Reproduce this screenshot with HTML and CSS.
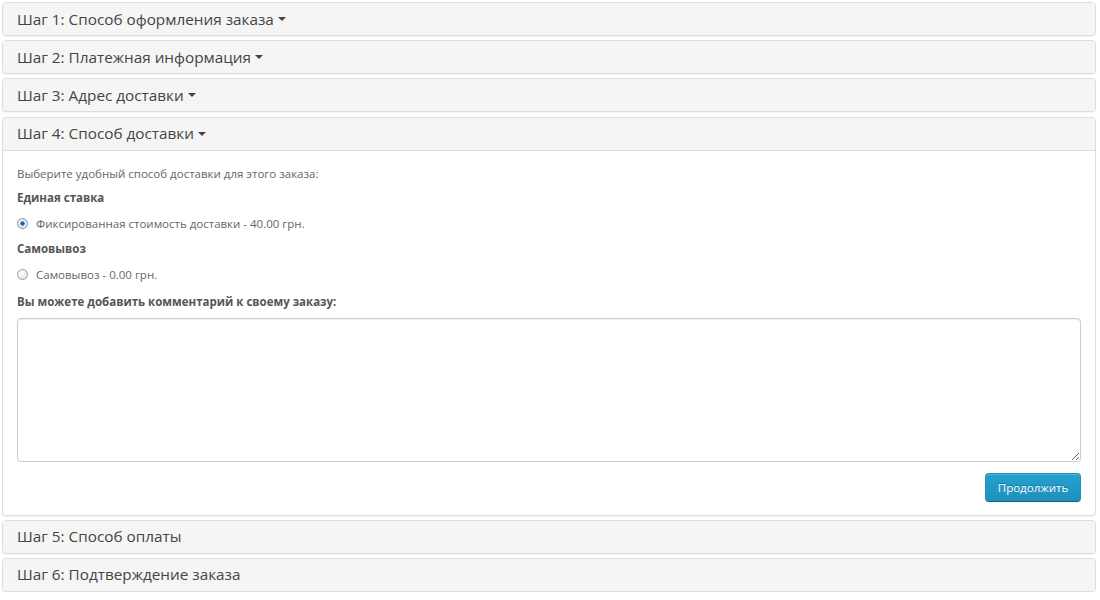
FILE: index.html
```html
<!DOCTYPE html>
<html lang="ru">
<head>
<meta charset="utf-8">
<title>Оформление заказа</title>
<link rel="stylesheet" href="styles.css">
</head>
<body>
<div class="panel-group">
  <div class="panel">
    <div class="panel-heading"><h4 class="panel-title">Шаг 1: Способ оформления заказа <span class="caret"></span></h4></div>
  </div>
  <div class="panel">
    <div class="panel-heading"><h4 class="panel-title">Шаг 2: Платежная информация <span class="caret"></span></h4></div>
  </div>
  <div class="panel">
    <div class="panel-heading"><h4 class="panel-title">Шаг 3: Адрес доставки <span class="caret"></span></h4></div>
  </div>
  <div class="panel">
    <div class="panel-heading open"><h4 class="panel-title">Шаг 4: Способ доставки <span class="caret"></span></h4></div>
    <div class="panel-body">
      <p class="line first">Выберите удобный способ доставки для этого заказа:</p>
      <p class="line strong m8">Единая ставка</p>
      <label class="line radio m10"><span class="radio-dot checked"></span>Фиксированная стоимость доставки - 40.00 грн.</label>
      <p class="line strong m9">Самовывоз</p>
      <label class="line radio m10"><span class="radio-dot"></span>Самовывоз - 0.00 грн.</label>
      <p class="line strong m11">Вы можете добавить комментарий к своему заказу:</p>
      <textarea class="comment" rows="8"></textarea>
      <div class="buttons">
        <button class="btn-primary" type="button">Продолжить</button>
      </div>
    </div>
  </div>
  <div class="panel">
    <div class="panel-heading"><h4 class="panel-title">Шаг 5: Способ оплаты</h4></div>
  </div>
  <div class="panel">
    <div class="panel-heading"><h4 class="panel-title">Шаг 6: Подтверждение заказа</h4></div>
  </div>
</div>
</body>
</html>
```
FILE: styles.css
```css
* { box-sizing: border-box; }
html, body { margin: 0; padding: 0; background: #fff; }
body {
  font-family: "Open Sans", "Liberation Sans", sans-serif;
  font-size: 11.5px;
  color: #666;
}
.panel-group {
  display: flex;
  flex-direction: column;
  gap: 4.2px;
  padding: 2px 4px 0 2px;
}
.panel {
  border: 1px solid #ddd;
  border-radius: 4px;
  background: #fff;
  box-shadow: 0 1px 1px rgba(0,0,0,0.05);
  overflow: hidden;
}
.panel-heading {
  background: #f5f5f5;
  height: 32px;
  padding: 0 14px;
  display: flex;
  align-items: center;
}
.panel-heading.open { border-bottom: 1px solid #ddd; height: 33px; }
.panel-title {
  margin: 0;
  font-size: 15.3px;
  font-weight: 400;
  color: #444;
  line-height: 17px;
  display: flex;
  align-items: center;
}
.caret {
  display: inline-block;
  width: 0;
  height: 0;
  margin-left: 4px;
  border-top: 4px solid #444;
  border-left: 4px solid transparent;
  border-right: 4px solid transparent;
}
.panel-body {
  padding: 15px 14px 13px 14px;
  display: flex;
  flex-direction: column;
}
.line { margin: 0; line-height: 16px; height: 16px; white-space: nowrap; }
.strong { font-weight: 700; color: #555; }
.m8 { margin-top: 8px; }
.m9 { margin-top: 9px; }
.m10 { margin-top: 10px; }
.m11 { margin-top: 11px; }
.radio { display: flex; align-items: center; }
.radio-dot {
  width: 11px;
  height: 11px;
  border-radius: 50%;
  border: 1px solid #9a9a9a;
  background: radial-gradient(circle at 40% 35%, #fff 0, #e6e6e6 70%, #d2d2d2 100%);
  margin: 0 8px 0 0;
  flex: none;
}
.radio-dot.checked {
  border-color: #7b8ea3;
  background: radial-gradient(circle, #1a4f86 0, #2e6bb0 28%, #cfe0f0 38%, #f2f6fa 70%, #dfe6ee 100%);
}
.comment {
  margin-top: 8px;
  width: 100%;
  height: 144px;
  border: 1px solid #ccc;
  border-radius: 4px;
  box-shadow: inset 0 1px 1px rgba(0,0,0,0.075);
  font-family: inherit;
  font-size: 12px;
  padding: 6px 12px;
  resize: vertical;
}
.buttons {
  margin-top: 11px;
  display: flex;
  justify-content: flex-end;
}
.btn-primary {
  width: 96px;
  height: 29px;
  font-family: inherit;
  font-size: 11.5px;
  color: #fff;
  text-shadow: 0 -1px 0 rgba(0,0,0,0.25);
  background: linear-gradient(to bottom, #23a1d1, #1f90bb);
  border: 1px solid;
  border-color: #1f90bb #1f90bb #145e7a;
  border-radius: 4px;
  box-shadow: inset 0 1px 0 rgba(255,255,255,0.2), 0 1px 2px rgba(0,0,0,0.05);
  padding: 0;
  cursor: pointer;
}
```
